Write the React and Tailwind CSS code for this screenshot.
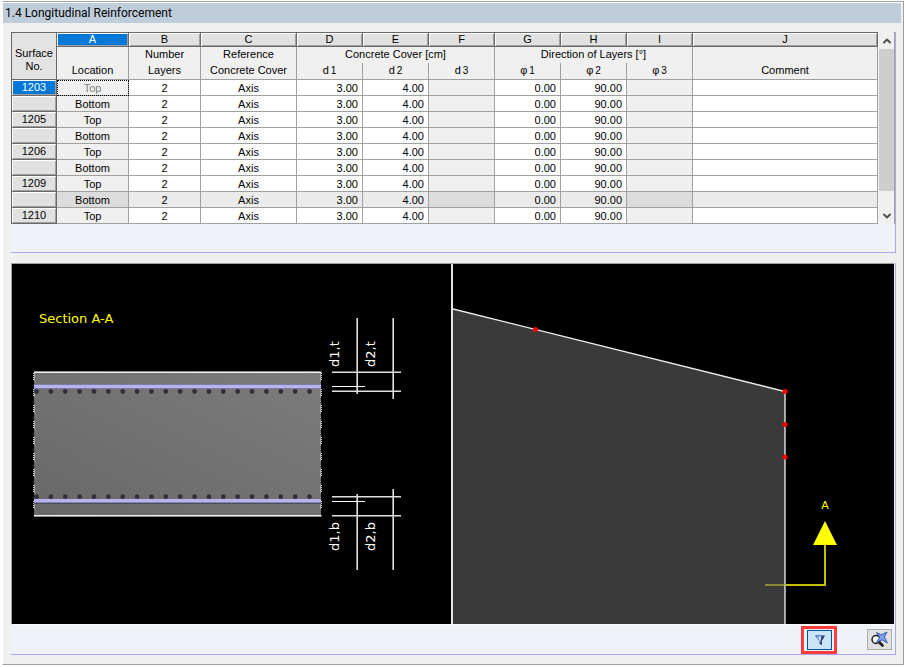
import { ChevronUp, ChevronDown } from 'lucide-react';

const columns = ['A', 'B', 'C', 'D', 'E', 'F', 'G', 'H', 'I', 'J'];

const rows = [
  { no: '1203', location: 'Top', active: true },
  { no: '', location: 'Bottom' },
  { no: '1205', location: 'Top' },
  { no: '', location: 'Bottom' },
  { no: '1206', location: 'Top' },
  { no: '', location: 'Bottom' },
  { no: '1209', location: 'Top' },
  { no: '', location: 'Bottom', shaded: true },
  { no: '1210', location: 'Top' },
];

const headBevel = 'border-r border-b border-[#696969] font-normal';
const raised = 'shadow-[inset_1px_1px_0_#ffffff,inset_-1px_-1px_0_#a0a0a0]';
const headCell = 'border-r border-b border-[#a0a0a0] p-0 font-normal';
const groupCell = 'border-r border-[#a0a0a0] p-0 align-top font-normal';
const cell = 'border-r border-b border-[#a0a0a0] p-0 pt-[2px]';

function TwoLines({ first, second }) {
  return (
    <div className="flex flex-col gap-[2px]">
      <span>{first}</span>
      <span>{second}</span>
    </div>
  );
}

function ReinforcementTable() {
  return (
    <table className="min-w-0 flex-1 table-fixed border-separate border-spacing-0 border-t border-l border-[#696969] text-center text-[11px] leading-[13px] text-black">
      <colgroup>
        <col className="w-[45px]" />
        <col className="w-[72px]" />
        <col className="w-[72px]" />
        <col className="w-[96px]" />
        <col className="w-[66px]" />
        <col className="w-[66px]" />
        <col className="w-[66px]" />
        <col className="w-[66px]" />
        <col className="w-[66px]" />
        <col className="w-[66px]" />
        <col />
      </colgroup>
      <thead className="bg-[#f0f0f0]">
        <tr className="h-[14px]">
          <th scope="col" rowSpan={3} className={`${headBevel} bg-[#e3e3e3] pt-2`}>
            Surface
            <br />
            No.
          </th>
          {columns.map((name) => (
            <th
              key={name}
              scope="col"
              className={`${headBevel} ${raised} p-0 ${name === 'A' ? 'bg-[#0078d7] text-white' : 'bg-[#e1e1e1]'}`}
            >
              {name}
            </th>
          ))}
        </tr>
        <tr className="h-4 leading-[14px]">
          <th rowSpan={2} className="border-r border-b border-[#a0a0a0] pb-[2px] align-bottom font-normal">
            Location
          </th>
          <th rowSpan={2} className={`${headCell} align-top`}>
            <TwoLines first="Number" second="Layers" />
          </th>
          <th rowSpan={2} className={`${headCell} align-top`}>
            <TwoLines first="Reference" second="Concrete Cover" />
          </th>
          <th colSpan={3} className={groupCell}>Concrete Cover [cm]</th>
          <th colSpan={3} className={groupCell}>Direction of Layers [°]</th>
          <th rowSpan={2} className="border-r border-b border-[#a0a0a0] pb-[2px] align-bottom font-normal">
            Comment
          </th>
        </tr>
        <tr className="h-[17px] leading-[14px]">
          {['d', 'φ'].map((letter) =>
            [1, 2, 3].map((index) => (
              <th key={letter + index} className={`${headCell} align-top`}>
                {letter}
                <span className="ml-[2px] text-[10px] leading-none">{index}</span>
              </th>
            ))
          )}
        </tr>
      </thead>
      <tbody>
        {rows.map((row, i) => {
          const locked = row.shaded ? 'bg-[#dcdcdc]' : 'bg-[#f0f0f0]';
          return (
            <tr key={i} className={`h-4 ${row.shaded ? 'bg-[#ebebeb]' : 'bg-white'}`}>
              <th
                scope="row"
                className={`${headBevel} ${raised} p-0 pt-px align-top ${row.active ? 'bg-[#0078d7] text-white' : 'bg-[#e1e1e1]'}`}
              >
                {row.no}
              </th>
              <td
                className={`${cell} ${locked} ${row.active ? 'text-[#808080] outline-1 -outline-offset-1 outline-dotted outline-black' : ''}`}
              >
                {row.location}
              </td>
              <td className={cell}>2</td>
              <td className={cell}>Axis</td>
              <td className={`${cell} pr-1 text-right`}>3.00</td>
              <td className={`${cell} pr-1 text-right`}>4.00</td>
              <td className={`${cell} ${locked}`}></td>
              <td className={`${cell} pr-1 text-right`}>0.00</td>
              <td className={`${cell} pr-1 text-right`}>90.00</td>
              <td className={`${cell} ${locked}`}></td>
              <td className={cell}></td>
            </tr>
          );
        })}
      </tbody>
    </table>
  );
}

function ScrollBar() {
  return (
    <div className="ml-px flex w-4 flex-col border-r border-[#a0a0a0] bg-[#f0f0f0] text-[#505050]">
      <button type="button" aria-label="Scroll up" className="flex h-[17px] items-center justify-center">
        <ChevronUp size={12} strokeWidth={4} />
      </button>
      <div className="flex-1">
        <div className="h-[90%] bg-[#cdcdcd]" />
      </div>
      <button type="button" aria-label="Scroll down" className="flex h-[17px] items-center justify-center">
        <ChevronDown size={12} strokeWidth={4} />
      </button>
    </div>
  );
}

function SectionView() {
  const bars = Array.from({ length: 20 }, (_, i) => 24.5 + i * 14.37);
  const label = "fill-white font-['DejaVu_Sans'] text-[13px]";
  return (
    <svg viewBox="0 0 439 360" className="h-full w-full">
      <defs>
        <linearGradient id="slab" x1="0" y1="1" x2="1" y2="0">
          <stop offset="0" stopColor="#686868" />
          <stop offset="1" stopColor="#7c7c7c" />
        </linearGradient>
      </defs>
      <text x="27" y="59" className="fill-[#ffff00] font-['DejaVu_Sans'] text-[13px]">
        Section A-A
      </text>

      <rect x="22" y="107" width="287" height="146" fill="url(#slab)" />
      <path d="M22 107.5H309.5M22 252.5H309.5" stroke="#8c8c8c" />
      <path d="M22 108.5H309.5M22 251.5H309.5" stroke="#f0f0f0" />
      {/* cut edges: short groups of dots */}
      <path d="M21.5 109V245M309.5 109V245" stroke="#d8d8d8" strokeDasharray="1 1 1 1 1 1 1 9" />
      <path d="M22.5 109V245M308.5 109V245" stroke="#a8a8a8" strokeDasharray="8 8" />

      <rect x="22" y="120" width="287" height="5" fill="#7c7ca4" />
      <rect x="22" y="121" width="287" height="3" fill="#b6b4ec" />
      <rect x="22" y="235" width="287" height="4" fill="#b6b4ec" />
      <rect x="22" y="238" width="287" height="1" fill="#8484b0" />
      <rect x="22" y="239" width="287" height="1" fill="#4c4c60" />
      {bars.map((x) => (
        <g key={x} fill="#30303f">
          <circle cx={x} cy="127.5" r="2.4" />
          <circle cx={x} cy="232.7" r="2.4" />
        </g>
      ))}

      <g stroke="#e0e0e0" strokeWidth="1.6">
        <path d="M345.2 54V130M381.2 54V135" />
        <path d="M320 108.2H389M320 127.2H389" />
        <path d="M345.2 230V306M381.2 225V306" />
        <path d="M320 232.8H389M320 251.8H389" />
      </g>
      <path d="M320 122.5H353M320 237.5H353" stroke="#ffffff" />

      <text transform="translate(327 103) rotate(-90)" className={label}>d1,t</text>
      <text transform="translate(363 103) rotate(-90)" className={label}>d2,t</text>
      <text transform="translate(327 287) rotate(-90)" className={label}>d1,b</text>
      <text transform="translate(363 287) rotate(-90)" className={label}>d2,b</text>
    </svg>
  );
}

function SurfaceView() {
  const nodes = [
    [82.5, 65.5],
    [332, 127.5],
    [332, 160.5],
    [332, 193],
  ];
  return (
    <svg viewBox="0 0 441 360" className="h-full w-full">
      <path d="M0 45L332 127.5V360H0Z" fill="#3a3a3a" />
      <path d="M0 45L332 127.5V360" fill="none" stroke="#f0f0f0" strokeWidth="1.3" />
      {nodes.map(([x, y]) => (
        <circle key={y} cx={x} cy={y} r="2.5" fill="#ff0000" />
      ))}
      <path d="M312 321H331" stroke="#8c8838" strokeWidth="2" />
      <path d="M333 321H372V280" fill="none" stroke="#c4c000" strokeWidth="2" />
      <path d="M372 257L384 281H360Z" fill="#ffff00" />
      <text x="372" y="245" textAnchor="middle" className="fill-[#ffff00] font-['DejaVu_Sans'] text-[11px]">
        A
      </text>
    </svg>
  );
}

function FilterIcon() {
  return (
    <svg viewBox="0 0 12 12" className="h-3 w-3">
      <path d="M1.5 1H10.5V2.5L7.8 6.5V11L5 9.5V6.5L1.5 2.5Z" fill="#4a74bf" />
      <path d="M2.2 2.5H6L6.4 6V9L5.4 8.5V6Z" fill="#8fb8f2" />
      <path d="M5 2.5H7L6.8 8H6Z" fill="#e6f1ff" />
      <path d="M8 2.5H10.5L7.8 6.5V11L6.6 10.4V6.5Z" fill="#1b2c5c" />
      <path d="M1.5 1.5H10.5" stroke="#5f8ad6" />
    </svg>
  );
}

function ViewIcon() {
  return (
    <svg viewBox="0 0 17 17" className="h-[17px] w-[17px] shrink-0">
      <path d="M8.5 11.5L11.5 14.5" stroke="#202020" strokeWidth="2.8" strokeLinecap="round" />
      <circle cx="5" cy="8.5" r="4" fill="#f8f8f8" stroke="#202020" strokeWidth="1.5" />
      <path
        d="M5.5 1.5L10.5 3.8L16 1L13.4 5.8L16.4 12L11 8.8L5.5 11.5L8.6 6.2Z"
        fill="#7fa3ee"
        stroke="#2c4fa6"
        strokeWidth="0.9"
      />
    </svg>
  );
}

export default function App() {
  return (
    <div className="flex min-h-screen bg-white pt-px pr-[2px] pb-[2px] pl-[2px] font-['Liberation_Sans',sans-serif]">
      <div className="flex min-w-0 flex-1 flex-col border border-[#a0a0a0] border-l-white bg-[#f0f0f0]">
        <div className="border-t border-white pr-[2px]">
          <h1 className="h-5 bg-[#bfcddb] pl-[2px] font-['Roboto',sans-serif] text-[12px] leading-5 text-black">
            1.4 Longitudinal Reinforcement
          </h1>
        </div>

        <main className="flex flex-1 flex-col gap-[10px] pt-[9px] pr-[7px] pb-[9px] pl-2">
          <section className="border-r border-b border-[#a9a7f0] bg-[#eff3f9] pb-7">
            <div className="flex">
              <ReinforcementTable />
              <ScrollBar />
            </div>
          </section>

          <section className="flex flex-1 flex-col border-r border-b border-[#a9a7f0] bg-[#eff3f9]">
            <div className="mr-px flex flex-1 border-t border-b border-l border-[#a0a0a0] border-b-white bg-black">
              <div className="min-w-0 flex-[439]">
                <SectionView />
              </div>
              <div className="w-[2px] bg-[#e4e4e4]" />
              <div className="min-w-0 flex-[441]">
                <SurfaceView />
              </div>
            </div>
            <div className="flex h-[29px] items-center justify-end gap-[30px] pr-[3px]">
              <span className="flex border-[3px] border-[#ff3b3b] py-px pr-[2px] pl-[3px]">
                <button
                  type="button"
                  aria-label="Filter"
                  className="flex h-5 w-[25px] items-center justify-center border border-[#005499] bg-[#cce4f7]"
                >
                  <FilterIcon />
                </button>
              </span>
              <button
                type="button"
                aria-label="View mode"
                className="flex h-[21px] w-[25px] items-center justify-center border border-[#adadad] bg-[#e1e1e1]"
              >
                <ViewIcon />
              </button>
            </div>
          </section>
        </main>
      </div>
    </div>
  );
}
